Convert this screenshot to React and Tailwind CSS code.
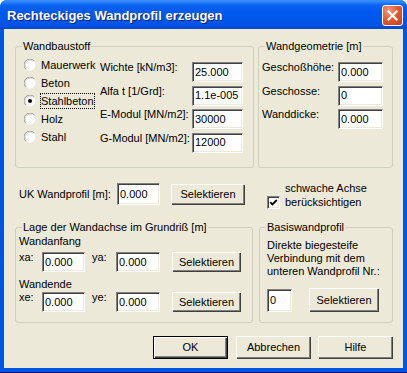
export default function App() {
  const field =
    "bg-white border border-t-[#808080] border-l-[#808080] border-r-white border-b-white shadow-[inset_1px_1px_0_#404040,inset_-1px_-1px_0_#ece9d8] flex items-center pl-[2px] leading-[13px]";
  const btn =
    "bg-[#ece9d8] flex items-center justify-center leading-[13px] shadow-[inset_1px_1px_0_#fff,inset_-1px_-1px_0_#404040,inset_-2px_-2px_0_#808080]";

  const Radio = ({ checked }) => (
    <svg width="12" height="12" viewBox="0 0 12 12" className="shrink-0">
      <circle cx="6" cy="6" r="5.5" fill="#fff" />
      <path d="M1.8 10.2 A5.9 5.9 0 0 1 10.2 1.8" fill="none" stroke="#9a9a9a" strokeWidth="1" />
      <path d="M2.6 9.4 A4.8 4.8 0 0 1 9.4 2.6" fill="none" stroke="#d6d3c8" strokeWidth="1" />
      {checked && <circle cx="6" cy="6" r="2" fill="#000" />}
    </svg>
  );

  const Group = ({ title, className, children }) => (
    <div className={`relative border border-[#d0d0bf] rounded-[3px] shrink-0 ${className}`}>
      <span className="absolute left-[6px] top-[-7px] bg-[#ece9d8] px-px leading-[13px]">{title}</span>
      {children}
    </div>
  );

  const materials = ["Mauerwerk", "Beton", "Stahlbeton", "Holz", "Stahl"];
  const props = [
    ["Wichte [kN/m3]:", "25.000"],
    ["Alfa t [1/Grd]:", "1.1e-005"],
    ["E-Modul [MN/m2]:", "30000"],
    ["G-Modul [MN/m2]:", "12000"],
  ];
  const geo = [
    ["Geschoßhöhe:", "0.000"],
    ["Geschosse:", "0"],
    ["Wanddicke:", "0.000"],
  ];

  return (
    <div className="w-[407px] h-[373px] flex flex-col rounded-t-[7px] overflow-hidden bg-[#0055e5] font-['Liberation_Sans',Arial,sans-serif] text-[11px] text-black">
      {/* title bar */}
      <div className="h-[29px] shrink-0 flex justify-between bg-[linear-gradient(180deg,#3d8ef5_0%,#2f86ff_6%,#0a62f2_18%,#0058ee_45%,#0055e6_85%,#0047d2_100%)]">
        <span className="pl-[7px] pt-[8px] text-white font-bold text-[13px] leading-[16px] [text-shadow:1px_1px_0_#0a1e72]">
          Rechteckiges Wandprofil erzeugen
        </span>
        <div className="mt-[5px] mr-[4px] w-[21px] h-[21px] rounded-[3px] border border-white bg-[radial-gradient(circle_at_30%_25%,#f29a7c_0%,#e25b35_45%,#c93c17_100%)] flex items-center justify-center">
          <svg width="11" height="11" viewBox="0 0 11 11">
            <path d="M1.5 1.5 L9.5 9.5 M9.5 1.5 L1.5 9.5" stroke="#fff" strokeWidth="2.2" strokeLinecap="square" />
          </svg>
        </div>
      </div>

      {/* client frame */}
      <div className="flex-1 px-[4px] pb-[4px] border-b border-[#00138c]">
        <div className="h-full bg-[#ece9d8] pl-[11px] pt-[17px] flex flex-col">
          {/* row 1 */}
          <div className="flex gap-[4px]">
            <Group title="Wandbaustoff" className="w-[239px] h-[122px] flex">
              <div className="w-[84px] pl-[8px] pt-[9px] flex flex-col">
                {materials.map((m, i) => (
                  <div key={m} className="h-[18px] flex items-center gap-[5px]">
                    <Radio checked={i === 2} />
                    {i === 2 ? (
                      <span className="-ml-px border border-dotted border-black leading-[14px]">{m}</span>
                    ) : (
                      <span className="leading-[13px]">{m}</span>
                    )}
                  </div>
                ))}
              </div>
              <div className="pt-[15px] flex flex-col gap-[3.5px]">
                {props.map(([l, v]) => (
                  <div key={l} className="flex h-[20px]">
                    <span className="w-[92px] leading-[13px] -mt-px">{l}</span>
                    <div className={`${field} w-[51px] h-[20px]`}>{v}</div>
                  </div>
                ))}
              </div>
            </Group>
            <Group title="Wandgeometrie [m]" className="w-[135px] h-[122px]">
              <div className="pl-[3px] pt-[15px] flex flex-col gap-[3.5px]">
                {geo.map(([l, v]) => (
                  <div key={l} className="flex h-[20px]">
                    <span className="w-[76px] leading-[13px] -mt-px">{l}</span>
                    <div className={`${field} w-[45px] h-[20px]`}>{v}</div>
                  </div>
                ))}
              </div>
            </Group>
          </div>

          {/* row 2 */}
          <div className="mt-[15px] h-[22px] flex items-start">
            <span className="w-[102px] pl-[4px] h-[22px] flex items-center leading-[13px]">UK Wandprofil [m]:</span>
            <div className={`${field} w-[43px] h-[22px]`}>0.000</div>
            <div className={`${btn} ml-[11px] mt-px w-[74px] h-[21px]`}>Selektieren</div>
            <div className="ml-[22px] flex">
              <div className="mt-[13px] w-[13px] h-[13px] bg-white border border-t-[#808080] border-l-[#808080] border-r-white border-b-white shadow-[inset_1px_1px_0_#404040,inset_-1px_-1px_0_#ece9d8] flex items-center justify-center">
                <svg width="9" height="9" viewBox="0 0 9 9">
                  <path d="M1.2 4.2 L3.4 6.4 L7.8 2" fill="none" stroke="#000" strokeWidth="1.8" />
                </svg>
              </div>
              <div className="ml-[5px] -mt-[2px] leading-[14px]">
                <div>schwache Achse</div>
                <div>berücksichtigen</div>
              </div>
            </div>
          </div>

          {/* row 3 */}
          <div className="mt-[22px] flex gap-[6px]">
            <Group title="Lage der Wandachse im Grundriß [m]" className="w-[238px] h-[96px] pl-[3px] pt-[7px] flex flex-col">
              <span className="leading-[13px]">Wandanfang</span>
              <div className="mt-[4px] flex h-[20px]">
                <span className="w-[23px] leading-[13px] -mt-px">xa:</span>
                <div className={`${field} w-[43px] h-[20px]`}>0.000</div>
                <span className="ml-[7px] w-[24px] leading-[13px] -mt-px">ya:</span>
                <div className={`${field} w-[44px] h-[20px]`}>0.000</div>
                <div className={`${btn} ml-[12px] w-[69px] h-[20px]`}>Selektieren</div>
              </div>
              <span className="mt-[6px] leading-[13px]">Wandende</span>
              <div className="mt-px flex h-[20px]">
                <span className="w-[23px] leading-[13px] -mt-px">xe:</span>
                <div className={`${field} w-[43px] h-[20px]`}>0.000</div>
                <span className="ml-[7px] w-[24px] leading-[13px] -mt-px">ye:</span>
                <div className={`${field} w-[44px] h-[20px]`}>0.000</div>
                <div className={`${btn} ml-[12px] w-[69px] h-[20px]`}>Selektieren</div>
              </div>
            </Group>
            <Group title="Basiswandprofil" className="w-[134px] h-[96px] pl-[7px] pt-[11px] flex flex-col">
              <div className="leading-[13px]">
                <div>Direkte biegesteife</div>
                <div>Verbindung mit dem</div>
                <div>unteren Wandprofil Nr.:</div>
              </div>
              <div className="mt-[11px] flex">
                <div className={`${field} w-[25px] h-[23px]`}>0</div>
                <div className={`${btn} ml-[17px] -mt-px w-[70px] h-[24px]`}>Selektieren</div>
              </div>
            </Group>
          </div>

          {/* row 4 */}
          <div className="mt-[13px] flex">
            <div className={`${btn} ml-[138px] w-[75px] h-[23px] border border-black`}>OK</div>
            <div className={`${btn} ml-[8px] w-[75px] h-[23px]`}>Abbrechen</div>
            <div className={`${btn} ml-[7px] w-[75px] h-[23px]`}>Hilfe</div>
          </div>
        </div>
      </div>
    </div>
  );
}
